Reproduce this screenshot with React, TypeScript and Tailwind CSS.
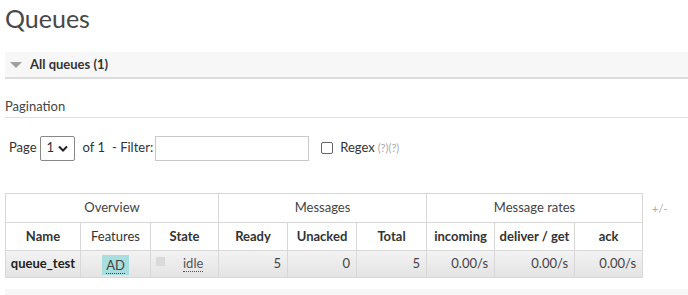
import React from "react";

const font = { fontFamily: "Lato, 'Noto Sans', sans-serif" };

function Th({ children, bold = true }: { children: React.ReactNode; bold?: boolean }) {
  return (
    <th className={`border border-[#d8d8d8] h-[28px] p-0 text-[13px] text-[#333] ${bold ? "font-bold" : "font-normal"} text-center`}>
      {children}
    </th>
  );
}

function Td({ children }: { children: React.ReactNode }) {
  return (
    <td className="border border-[#d8d8d8] h-[27px] px-[6px] text-[13px] text-[#444] text-right">
      {children}
    </td>
  );
}

export default function App() {
  return (
    <div className="w-[688px] h-[295px] bg-white overflow-hidden text-[#444]" style={font}>
      {/* Title */}
      <h1 className="pl-[5px] pt-[3px] text-[25px] leading-[31px] font-normal text-[#484848]">Queues</h1>

      {/* Section header */}
      <div className="ml-[5px] mt-[18px] h-[27px] bg-[#f7f7f7] border-b-2 border-[#dcdcdc] flex items-center">
        <svg width="12" height="8" viewBox="0 0 12 8" className="ml-[5px] mr-[8px]">
          <polygon points="0,1 12,1 6,7" fill="#a0a0a0" />
        </svg>
        <span className="text-[13px] font-bold text-[#333]">All queues (1)</span>
      </div>

      {/* Pagination heading */}
      <div className="ml-[5px] mt-[19px] h-[20px] border-b border-[#e2e2e2] text-[13px] leading-[17px] text-[#444]">
        Pagination
      </div>

      {/* Controls */}
      <div className="flex items-center h-[26px] mt-[17px] pl-[9px] text-[13px] text-[#333]">
        <span>Page</span>
        <div className="ml-[3px] w-[35px] h-[25px] border border-[#888] rounded-[2px] flex items-center justify-between px-[6px] bg-white">
          <span className="text-[13px]">1</span>
          <svg width="10" height="7" viewBox="0 0 10 7">
            <polyline points="1,1.5 5,5.5 9,1.5" fill="none" stroke="#222" strokeWidth="2" />
          </svg>
        </div>
        <span className="ml-[8px]">of 1</span>
        <span className="ml-[7px]">- Filter:</span>
        <div className="ml-[2px] w-[154px] h-[25px] border border-[#c8c8c8] bg-white" />
        <div className="ml-[12px] w-[12px] h-[12px] border border-[#666] rounded-[2px] bg-white" />
        <span className="ml-[7px]">Regex</span>
        <span className="ml-[3px] text-[11px] text-[#aaa]">(?)(?)</span>
      </div>

      {/* Table */}
      <div className="flex items-start mt-[32px] ml-[5px]">
        <table className="border-collapse table-fixed w-[637px]">
          <colgroup>
            <col className="w-[75px]" />
            <col className="w-[70px]" />
            <col className="w-[68px]" />
            <col className="w-[69px]" />
            <col className="w-[69px]" />
            <col className="w-[70px]" />
            <col className="w-[68px]" />
            <col className="w-[80px]" />
            <col className="w-[68px]" />
          </colgroup>
          <thead>
            <tr>
              <th colSpan={3} className="border border-[#d8d8d8] h-[29px] p-0 text-[13px] font-normal text-[#444]">Overview</th>
              <th colSpan={3} className="border border-[#d8d8d8] h-[29px] p-0 text-[13px] font-normal text-[#444]">Messages</th>
              <th colSpan={3} className="border border-[#d8d8d8] h-[29px] p-0 text-[13px] font-normal text-[#444]">Message rates</th>
            </tr>
            <tr>
              <Th>Name</Th>
              <Th bold={false}>Features</Th>
              <Th>State</Th>
              <Th>Ready</Th>
              <Th>Unacked</Th>
              <Th>Total</Th>
              <Th>incoming</Th>
              <Th>deliver / get</Th>
              <Th>ack</Th>
            </tr>
          </thead>
          <tbody>
            <tr className="bg-gradient-to-b from-[#f3f3f3] to-[#e3e3e3]">
              <td className="border border-[#d8d8d8] h-[27px] px-[4px] text-[13px] font-bold text-[#222] text-center">queue_test</td>
              <td className="border border-[#d8d8d8] h-[27px] p-0 text-center">
                <span className="inline-block bg-[#a8dede] px-[4px] h-[20px] leading-[20px] text-[13px] text-[#444]">
                  <span className="border-b border-dotted border-[#444]">AD</span>
                </span>
              </td>
              <td className="border border-[#d8d8d8] h-[27px] p-0 text-[13px] text-[#555]">
                <div className="flex items-center">
                  <span className="ml-[5px] w-[9px] h-[9px] bg-[#dadada] -mt-[6px]" />
                  <span className="ml-[18px] border-b border-dotted border-[#555] leading-[15px]">idle</span>
                </div>
              </td>
              <Td>5</Td>
              <Td>0</Td>
              <Td>5</Td>
              <Td>0.00/s</Td>
              <Td>0.00/s</Td>
              <Td>0.00/s</Td>
            </tr>
          </tbody>
        </table>
        <span className="ml-[9px] mt-[8px] text-[11px] text-[#aaa]">+/-</span>
      </div>

      {/* Next section bar */}
      <div className="ml-[5px] mt-[11px] h-[10px] bg-[#f7f7f7]" />
    </div>
  );
}
